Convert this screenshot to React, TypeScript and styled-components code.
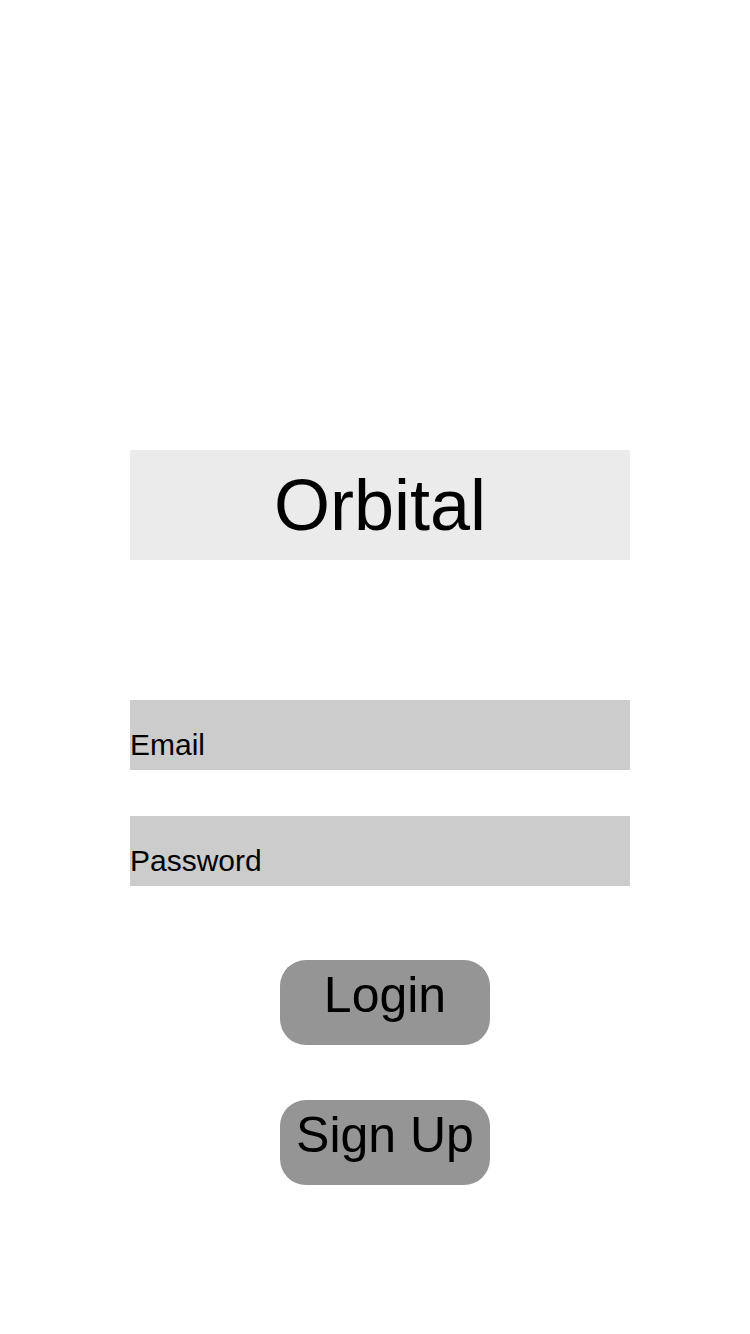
import React from 'react'
import styled, { createGlobalStyle } from 'styled-components'

const GlobalStyle = createGlobalStyle`
  html, body {
    margin: 0;
    padding: 0;
    background: #ffffff;
    font-family: "Liberation Sans", Arial, sans-serif;
  }
`;

interface FieldProps {
  label: string;
}

const Field = ({ label }: FieldProps) => (
  <FieldBox>
    <FieldText>{label}</FieldText>
  </FieldBox>
);

export default function App() {
  return (
    <>
      <GlobalStyle />
      <Screen>
        <TitleBox>
          <Title>Orbital</Title>
        </TitleBox>
        <Form>
          <Field label="Email" />
          <Field label="Password" />
        </Form>
        <Buttons>
          <Button>Login</Button>
          <Button>Sign Up</Button>
        </Buttons>
      </Screen>
    </>
  );
}

const Screen = styled.div`
  width: 750px;
  height: 1334px;
  display: flex;
  flex-direction: column;
  align-items: center;
  padding-top: 450px;
  padding-left: 10px;
  box-sizing: border-box;
  background: #ffffff;
`;

const TitleBox = styled.div`
  width: 500px;
  height: 110px;
  background-color: #ebebeb;
  display: flex;
  align-items: center;
  justify-content: center;
`;

const Title = styled.div`
  font-size: 72px;
  color: #000000;
`;

const Form = styled.div`
  display: flex;
  flex-direction: column;
  gap: 46px;
  margin-top: 140px;
`;

const FieldBox = styled.div`
  width: 500px;
  height: 70px;
  background-color: #cccccc;
  display: flex;
  align-items: flex-end;
  padding-bottom: 8px;
  box-sizing: border-box;
`;

const FieldText = styled.span`
  font-size: 30px;
  color: #000000;
`;

const Buttons = styled.div`
  display: flex;
  flex-direction: column;
  gap: 55px;
  margin-top: 74px;
  margin-left: 10px;
`;

const Button = styled.div`
  width: 210px;
  height: 85px;
  border-radius: 26px;
  background-color: #959595;
  box-sizing: border-box;
  padding-top: 6px;
  text-align: center;
  font-size: 50px;
  color: #000000;
  cursor: pointer;
`;
